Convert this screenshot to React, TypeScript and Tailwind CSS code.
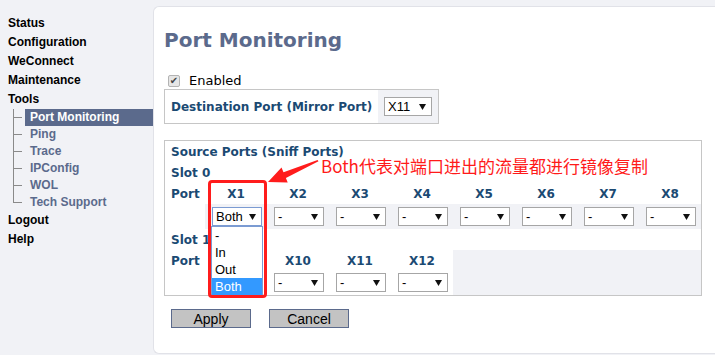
import React from 'react';

const topItems = ['Status', 'Configuration', 'WeConnect', 'Maintenance', 'Tools'];
const subItems = ['Port Monitoring', 'Ping', 'Trace', 'IPConfig', 'WOL', 'Tech Support'];
const slot0 = ['X1', 'X2', 'X3', 'X4', 'X5', 'X6', 'X7', 'X8'];
// X9 sits under the open dropdown, so its cell stays empty
const slot1 = ['', 'X10', 'X11', 'X12'];

const labelFont = "font-['DejaVu_Sans',Verdana,sans-serif] font-bold text-[12px] text-[#1b4a73]";

function Arrow() {
    return (
        <svg width="7" height="6" viewBox="0 0 7 6" className="shrink-0">
            <path d="M0 0 H7 L3.5 6 Z" fill="#111" />
        </svg>
    );
}

function FakeSelect({ value, focused, width = 'w-[50px]' }: { value: string; focused?: boolean; width?: string }) {
    return (
        <div
            className={`${width} h-[19px] bg-white border ${focused ? 'border-[#7b9bd2]' : 'border-[#a6a6a6]'} flex items-center justify-between pl-[3px] pr-[5px] text-[13px] text-black leading-none`}
        >
            <span>{value}</span>
            <Arrow />
        </div>
    );
}

function Sidebar() {
    return (
        <aside className="w-[153px] pt-[14px] shrink-0 font-['Liberation_Sans',Arial,sans-serif] text-[12px] font-bold">
            {topItems.map((t) => (
                <div key={t} className="h-[19px] leading-[19px] pl-[8px] text-black">{t}</div>
            ))}
            {subItems.map((t, i) => {
                const last = i === subItems.length - 1;
                const active = i === 0;
                return (
                    <div key={t} className="flex h-[17px]">
                        <div className="w-[25px] relative shrink-0">
                            <div className={`absolute left-[13px] top-0 ${last ? 'h-[9px]' : 'h-full'} border-l border-[#8a8a8a]`} />
                            <div className="absolute left-[13px] top-[8px] w-[9px] border-t border-[#8a8a8a]" />
                        </div>
                        <div className={`flex-1 leading-[17px] pl-[5px] ${active ? 'bg-[#5b6a8c] text-white' : 'text-[#5b6a8c]'}`}>{t}</div>
                    </div>
                );
            })}
            {['Logout', 'Help'].map((t) => (
                <div key={t} className="h-[19px] leading-[19px] pl-[8px] text-black">{t}</div>
            ))}
        </aside>
    );
}

function HeaderRow({ cols }: { cols: string[] }) {
    return (
        <div className="flex h-[21px] items-center">
            <div className={`w-[34px] ${labelFont}`}>Port</div>
            {cols.map((c, i) => (
                <div key={i} className={`w-[62px] text-center ${labelFont}`}>{c}</div>
            ))}
        </div>
    );
}

export default function App() {
    return (
        <div className="relative w-[715px] h-[355px] overflow-hidden bg-[#f1f2f6] flex">
            <Sidebar />
            <main className="flex-1 mt-[6px] h-[348px] bg-white border-l border-t border-b border-[#e1e2e8] rounded-l-[6px] pl-[10px] pt-[21px]">
                <h1 className="font-['DejaVu_Sans',Verdana,sans-serif] font-bold text-[20px] leading-[24px] text-[#5b6a8c]">
                    Port Monitoring
                </h1>

                <div className="mt-[21px] h-[16px] flex items-center ml-[4px] font-['DejaVu_Sans',Verdana,sans-serif] text-[13px] text-black">
                    <span className="w-[12px] h-[12px] bg-[#e6e6e6] border border-[#b3b3b3] rounded-[2px] flex items-center justify-center text-[10px] text-[#444] leading-none">✔</span>
                    <span className="ml-[9px]">Enabled</span>
                </div>

                <div className="w-[275px] h-[35px] border border-[#c6c6c6] flex">
                    <div className={`flex-1 pl-[6px] flex items-center ${labelFont}`}>Destination Port (Mirror Port)</div>
                    <div className="w-[60px] bg-[#f1f2f6] flex items-center pl-[6px] font-['Liberation_Sans',Arial,sans-serif]">
                        <FakeSelect value="X11" width="w-[48px]" />
                    </div>
                </div>

                <div className="mt-[16px] w-[538px] border border-[#c6c6c6] pl-[6px] font-['Liberation_Sans',Arial,sans-serif]">
                    <div className={`h-[21px] flex items-center ${labelFont}`}>Source Ports (Sniff Ports)</div>
                    <div className={`h-[21px] flex items-center ${labelFont}`}>Slot 0</div>
                    <HeaderRow cols={slot0} />
                    <div className="flex h-[25px]">
                        <div className="w-[34px]" />
                        {slot0.map((c, i) => (
                            <div key={c} className="w-[62px] bg-[#f1f2f6] pt-[3px] pl-[7px]">
                                {i === 0 ? (
                                    <div className="relative">
                                        <FakeSelect value="Both" focused />
                                        <div className="absolute left-[-1px] top-full z-10 w-[52px] bg-white border border-[#7b9bd2] text-[13px] text-black">
                                            {['-', 'In', 'Out', 'Both'].map((o) => (
                                                <div key={o} className={`h-[17px] leading-[17px] pl-[3px] ${o === 'Both' ? 'bg-[#3399ff] text-white' : ''}`}>{o}</div>
                                            ))}
                                        </div>
                                    </div>
                                ) : (
                                    <FakeSelect value="-" />
                                )}
                            </div>
                        ))}
                    </div>
                    <div className={`h-[21px] flex items-center ${labelFont}`}>Slot 1</div>
                    <div className="flex">
                        <div className="w-[282px]">
                            <HeaderRow cols={slot1} />
                            <div className="flex h-[24px]">
                                <div className="w-[34px]" />
                                {slot1.map((c, i) => (
                                    <div key={i} className="w-[62px] pt-[2px] pl-[7px]">
                                        {c && <FakeSelect value="-" />}
                                    </div>
                                ))}
                            </div>
                        </div>
                        <div className="flex-1 bg-[#f1f2f6]" />
                    </div>
                </div>

                <div className="mt-[13px] ml-[7px] flex gap-[18px] font-['Liberation_Sans',Arial,sans-serif] text-[14px] text-black">
                    <button className="w-[80px] h-[19px] bg-[#c3c3c3] border border-[#5b6a8c] leading-none">Apply</button>
                    <button className="w-[80px] h-[19px] bg-[#c3c3c3] border border-[#5b6a8c] leading-none">Cancel</button>
                </div>
            </main>

            {/* annotation overlay */}
            <div className="absolute left-[208px] top-[180px] w-[59px] h-[118px] border-[3px] border-[#ff1c1c] rounded-[4px] z-20" />
            <svg className="absolute left-0 top-0 z-20" width="715" height="355">
                <polygon points="268,182 287.7,182.4 285.9,178 318.5,161.3 317.6,160 283.5,172.3 281.5,167.6" fill="#ff1c1c" />
            </svg>
            <div className="absolute left-[321px] top-[155px] z-20 text-[17px] leading-[22px] text-[#ff1a1a] font-['Noto_Sans_CJK_SC',sans-serif] whitespace-nowrap">
                Both代表对端口进出的流量都进行镜像复制
            </div>
        </div>
    );
}
